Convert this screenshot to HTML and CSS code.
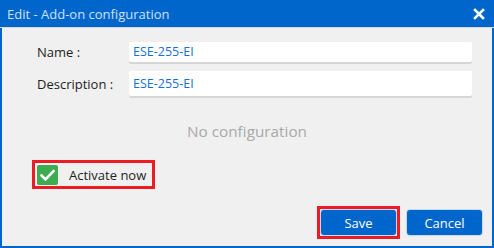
FILE: index.html
```html
<!DOCTYPE html>
<html>
<head>
<meta charset="utf-8">
<link rel="stylesheet" href="styles.css">
</head>
<body>
<div class="dialog">
  <div class="titlebar">
    <span class="title">Edit - Add-on configuration</span>
    <svg class="close" width="12" height="12" viewBox="0 0 12 12"><path d="M2 2 L10 10 M10 2 L2 10" stroke="#fff" stroke-width="2.6" stroke-linecap="square"/></svg>
  </div>
  <div class="body">
    <div class="form">
      <div class="row"><span class="label">Name :</span><div class="input">ESE-255-EI</div></div>
      <div class="row"><span class="label">Description :</span><div class="input tall">ESE-255-EI</div></div>
    </div>
    <div class="empty">No configuration</div>
    <div class="activate-wrap">
      <div class="activate">
        <span class="check"><svg width="21" height="20" viewBox="0 0 21 20"><path d="M4.5 10.5 L8.5 14.5 L16.5 6" fill="none" stroke="#fff" stroke-width="2.6" stroke-linecap="square"/></svg></span>
        <span class="act-label">Activate now</span>
      </div>
    </div>
    <div class="actions">
      <div class="hl"><button class="btn">Save</button></div>
      <button class="btn">Cancel</button>
    </div>
  </div>
</div>
</body>
</html>
```
FILE: styles.css
```css
html, body { margin: 0; padding: 0; }
body { width: 494px; height: 248px; overflow: hidden; font-family: "Open Sans", "Noto Sans", sans-serif; }
.dialog {
  width: 494px; height: 248px; box-sizing: border-box;
  border: 2px solid #0066cc; border-top: 0;
  background: #f0f0f0; display: flex; flex-direction: column;
}
.titlebar {
  height: 27px; margin: 0 -2px; background: #0066cc;
  display: flex; align-items: center; justify-content: space-between;
  padding: 0 9px 0 7px; flex: none;
  border-bottom: 1px solid #d9d9d9;
}
.title { color: #cfe0f5; font-size: 13px; }
.close { display: block; }
.body { flex: 1; display: flex; flex-direction: column; padding: 14px 20px 7px 30px; }
.form { display: flex; flex-direction: column; gap: 9px; }
.row { display: flex; align-items: center; }
.label { width: 92px; padding-left: 5px; font-size: 13px; color: #1e1e1e; flex: none; }
.input {
  flex: 1; height: 20px; background: #fff; border-radius: 2px;
  box-shadow: 0 2px 0 #d6d6d6; box-sizing: border-box;
  padding-left: 4px; font-size: 12.5px; color: #1570d0; line-height: 20px;
}
.input.tall { height: 25px; line-height: 25px; }
.empty { text-align: center; font-size: 15.3px; color: #a9a9a9; margin: 25px -20px 0 -30px; line-height: 20px; }
.activate-wrap { display: flex; margin-top: 19px; }
.activate {
  display: flex; align-items: center; gap: 11px;
  border: 3px solid #ec1c24; padding: 0 6px 0 2px; height: 23px;
}
.check { width: 21px; height: 20px; background: #3dab4f; border-radius: 2px; display: flex; }
.act-label { font-size: 13px; color: #1e1e1e; }
.actions { margin-top: auto; margin-right: -10px; display: flex; justify-content: flex-end; align-items: center; gap: 7px; }
.hl { border: 3px solid #ec1c24; padding: 1px; }
.btn {
  width: 75px; height: 25px; background: #0066cc; color: #fff; border: 0;
  border-radius: 3px; font-family: inherit; font-size: 13px; padding: 0;
  box-shadow: 0 0 0 1px #c8d8ec; display: block;
}
```
